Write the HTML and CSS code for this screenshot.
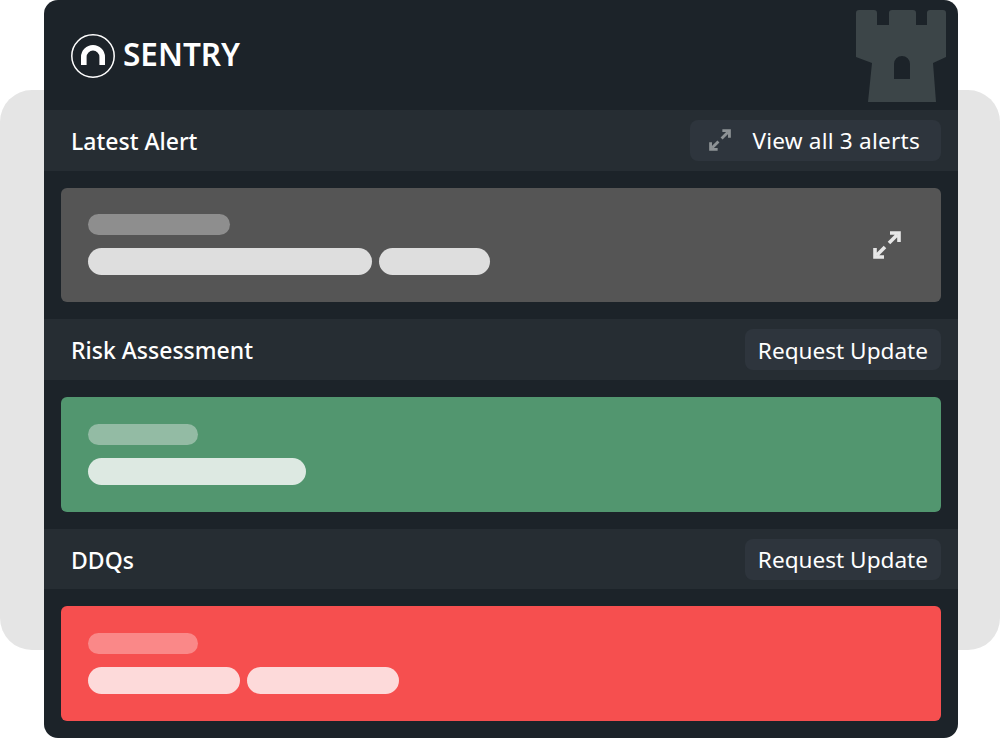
FILE: index.html
```html
<!DOCTYPE html>
<html>
    <head>
        <meta charset="utf-8"/>
        <title>Sentry</title>
        <link rel="stylesheet" href="styles.css">
    </head>
    <body>
        <!-- grey plate behind the panel -->
        <div class="backdrop"></div>

        <div class="panel">
            <div class="header">
                <div class="logo">
                    <svg class="logo-mark" width="44" height="44" viewBox="0 0 44 44">
                        <circle cx="22" cy="22" r="21.2" fill="none" stroke="#ffffff" stroke-width="1.5"/>
                        <path d="M12.8 31V23a9.2 9.2 0 0 1 18.4 0v8" fill="none" stroke="#ffffff" stroke-width="5.6"/>
                    </svg>
                    <span class="logo-text">SENTRY</span>
                </div>
                <svg class="castle" width="90" height="92" viewBox="0 0 90 92">
                    <path fill-rule="evenodd" fill="#3c4548" d="M3 0H18Q21 0 21 3V15H33V3Q33 0 36 0H57Q60 0 60 3V15H71V3Q71 0 74 0H87Q90 0 90 3V47L77 53L80 92H12L16 53L0 47V3Q0 0 3 0ZM38 69H54V54A8 8 0 0 0 38 54Z"/>
                </svg>
            </div>

            <div class="section-bar">
                <span class="section-title">Latest Alert</span>
                <div class="bar-button bar-button-alerts">
                    <svg class="expand expand-small" width="22" height="22" viewBox="0 0 28 28">
                        <path d="M16 12L24 4M17 2H26V11M12 16L4 24M2 17V26H11" fill="none" stroke="currentColor" stroke-width="3.6"/>
                    </svg>
                    <span>View all 3 alerts</span>
                </div>
            </div>
            <div class="card card-grey">
                <div class="card-lines">
                    <div class="pill pill-label w142"></div>
                    <div class="pill-row">
                        <div class="pill pill-text w284"></div>
                        <div class="pill pill-text w111"></div>
                    </div>
                </div>
                <svg class="expand" width="28" height="28" viewBox="0 0 28 28">
                    <path d="M16 12L24 4M17 2H26V11M12 16L4 24M2 17V26H11" fill="none" stroke="currentColor" stroke-width="3.6"/>
                </svg>
            </div>

            <div class="section-bar">
                <span class="section-title">Risk Assessment</span>
                <div class="bar-button">
                    <span>Request Update</span>
                </div>
            </div>
            <div class="card card-green">
                <div class="card-lines">
                    <div class="pill pill-label w110"></div>
                    <div class="pill-row">
                        <div class="pill pill-text w218"></div>
                    </div>
                </div>
            </div>

            <div class="section-bar">
                <span class="section-title">DDQs</span>
                <div class="bar-button">
                    <span>Request Update</span>
                </div>
            </div>
            <div class="card card-red">
                <div class="card-lines">
                    <div class="pill pill-label w110"></div>
                    <div class="pill-row">
                        <div class="pill pill-text w152"></div>
                        <div class="pill pill-text w152"></div>
                    </div>
                </div>
            </div>
        </div>
    </body>
</html>
```
FILE: styles.css
```css
/* page is exactly the window, panel sits centred-ish over the plate */
body {
    margin: 0;
    height: 738px;
    background-color: #ffffff;
    font-family: "Noto Sans", "Open Sans", sans-serif;
    color: #ffffff;
    overflow: hidden;
    position: relative;
}

.backdrop {
    position: absolute;
    left: 0;
    right: 0;
    top: 90px;
    height: 560px;
    border-radius: 32px;
    background-color: #e5e5e5;
}

.panel {
    position: relative;
    margin-left: 44px;
    width: 914px;
    height: 738px;
    box-sizing: border-box;
    border-radius: 14px;
    background-color: #1c2329;
    display: flex;
    flex-direction: column;
}

/* logo row */
.header {
    height: 110px;
    box-sizing: border-box;
    padding: 10px 12px 8px 27px;
    display: flex;
    justify-content: space-between;
}

.logo {
    display: flex;
    align-items: center;
    gap: 8px;
    height: 88px;
}

.logo-mark {
    margin-top: 4px;
}

.logo-text {
    font-size: 31.5px;
    font-weight: 600;
    line-height: 1;
}

/* section title bars */
.section-bar {
    height: 60.6px;
    flex: none;
    box-sizing: border-box;
    padding: 0 17px 0 27px;
    background-color: #262d33;
    display: flex;
    align-items: center;
    justify-content: space-between;
}

.section-title {
    font-size: 23px;
    font-weight: 500;
    padding-top: 1px;
}

.bar-button {
    height: 41px;
    box-sizing: border-box;
    padding: 0 13px;
    border-radius: 8px;
    background-color: #2e353d;
    font-size: 22.6px;
    display: flex;
    align-items: center;
    gap: 21px;
}

.bar-button span {
    padding-top: 1px;
}

.bar-button-alerts {
    padding: 0 21px 0 19px;
    letter-spacing: 0.22px;
}

.expand {
    color: #e6e6e6;
}

.expand-small {
    color: #8d9295;
}

/* coloured cards */
.card {
    height: 114.8px;
    flex: none;
    box-sizing: border-box;
    margin: 17px 17px;
    padding: 0 40px 0 27px;
    border-radius: 6px;
    display: flex;
    align-items: center;
    justify-content: space-between;
}

.card-lines {
    display: flex;
    flex-direction: column;
    gap: 13px;
}

.pill-row {
    display: flex;
    gap: 7px;
}

.pill {
    border-radius: 14px;
}

.pill-label {
    height: 21px;
}

.pill-text {
    height: 27px;
}

.card-grey { background-color: #555555; }
.card-grey .pill-label { background-color: #8e8e8e; }
.card-grey .pill-text { background-color: #dedede; }

.card-green { background-color: #52966f; }
.card-green .pill-label { background-color: #93bba4; }
.card-green .pill-text { background-color: #dde9e2; }

.card-red { background-color: #f64f4f; }
.card-red .pill-label { background-color: #fa8888; }
.card-red .pill-text { background-color: #fddada; }

.w110 { width: 110px; }
.w111 { width: 111px; }
.w142 { width: 142px; }
.w152 { width: 152px; }
.w218 { width: 218px; }
.w284 { width: 284px; }
```
